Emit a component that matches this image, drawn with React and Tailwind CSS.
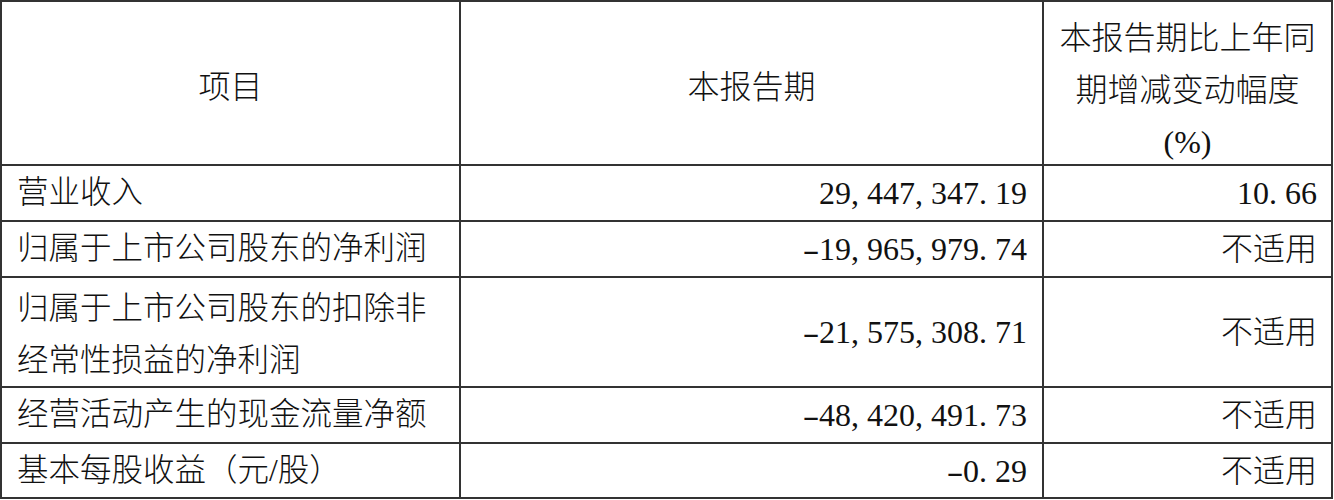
import React from 'react';

const rows = [
  { label: ['营业收入'], value: '29,447,347.19', change: '10.66' },
  { label: ['归属于上市公司股东的净利润'], value: '-19,965,979.74', change: '不适用' },
  {
    label: ['归属于上市公司股东的扣除非', '经常性损益的净利润'],
    value: '-21,575,308.71',
    change: '不适用',
  },
  { label: ['经营活动产生的现金流量净额'], value: '-48,420,491.73', change: '不适用' },
  { label: ['基本每股收益（元/股）'], value: '-0.29', change: '不适用' },
];

// SimSun-style half-width punctuation: comma/period take a full digit slot
const Num = ({ text }) => (
  <span>
    {text.split('').map((ch, i) => {
      if (ch === ',' || ch === '.') {
        return (
          <span key={i} className="inline-block w-[0.5em] text-left">
            {ch}
          </span>
        );
      }
      if (ch === '-') {
        return (
          <span key={i} className="inline-block w-[0.5em] text-center scale-x-[1.6]">
            {ch}
          </span>
        );
      }
      return <span key={i}>{ch}</span>;
    })}
  </span>
);

const cell = 'border-r-2 border-b-2 border-[#333] min-h-0 flex items-center';

function App() {
  return (
    <div className="w-[1334px] h-[500px] bg-white text-[#111] font-['Liberation_Serif','Noto_Sans_CJK_SC',serif] font-light text-[32px]">
      <div className="w-[1333px] grid grid-cols-[459px_583px_289px] grid-rows-[164px_56px_56px_110px_56px_55px] border-l-2 border-t-2 border-[#333]">
        <div className={`${cell} justify-center pt-[8px]`}>项目</div>
        <div className={`${cell} justify-center pt-[8px]`}>本报告期</div>
        <div className={`${cell} !items-start justify-center pt-[10px] leading-[52px] text-center`}>
          <div>
            <div>本报告期比上年同</div>
            <div>期增减变动幅度</div>
            <div>(%)</div>
          </div>
        </div>

        {rows.map((r, i) => (
          <React.Fragment key={i}>
            <div
              className={`${cell} pl-[15px] text-[31.5px] ${
                r.label.length > 1 ? 'leading-[52px] pt-[6px]' : ''
              }`}
            >
              <div>
                {r.label.map((l, j) => (
                  <div key={j}>{l}</div>
                ))}
              </div>
            </div>
            <div className={`${cell} justify-end pr-[15px]`}>
              <Num text={r.value} />
            </div>
            <div className={`${cell} justify-end pr-[14px]`}>
              <Num text={r.change} />
            </div>
          </React.Fragment>
        ))}
      </div>
    </div>
  );
}

export default App;
